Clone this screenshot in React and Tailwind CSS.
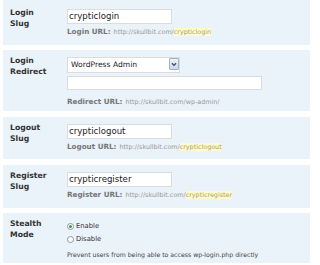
const font = { fontFamily: '"DejaVu Sans", Verdana, sans-serif' };

function Row({ label, children, className = '' }) {
  return (
    <div className={`flex bg-[#eaf2fa] ${className}`}>
      <div className="w-[64px] shrink-0 pl-[7px] pt-[5px] text-[7.7px] leading-[11px] font-bold text-[#333]">
        {label[0]}
        <br />
        {label[1]}
      </div>
      <div className="flex flex-col">{children}</div>
    </div>
  );
}

function UrlLine({ name, path, hl = true }) {
  return (
    <div className="mt-[3px] flex items-baseline h-[10px] leading-[10px] whitespace-nowrap">
      <span className="text-[7.2px] font-bold text-[#777]">{name} URL:</span>
      <span className="ml-[3px] text-[6.4px] text-[#999]">
        http://skullbit.com/
        {hl ? <span className="bg-[#fffbcc] text-[#aaa070]">{path}</span> : path}
      </span>
    </div>
  );
}

function TextBox({ value, wide }) {
  return (
    <div
      className={`${wide ? 'w-[195px] h-[14px] mt-[3px]' : 'w-[105px] h-[15px]'} bg-white border border-[#dcdcdc] pl-[1px] text-[8.6px] leading-[13px] text-[#222]`}
    >
      {value}
    </div>
  );
}

function Radio({ checked, label }) {
  return (
    <div className="flex items-center h-[13px]">
      <span className="w-[7px] h-[7px] rounded-full border border-[#8a9aa8] bg-white flex items-center justify-center">
        {checked && <span className="w-[3px] h-[3px] rounded-full bg-[#3f9a3a]" />}
      </span>
      <span className="ml-[2px] text-[6.8px] text-[#333]">{label}</span>
    </div>
  );
}

export default function App() {
  return (
    <div className="w-[310px] h-[265px] bg-white pl-[3px] overflow-hidden" style={font}>
      <div className="flex flex-col gap-[5px]">
        <Row label={['Login', 'Slug']} className="h-[45px] pt-[2px]">
          <div className="pt-[7px]">
            <TextBox value="crypticlogin" />
          </div>
          <UrlLine name="Login" path="crypticlogin" />
        </Row>

        <Row label={['Login', 'Redirect']} className="h-[61px]">
          <div className="pt-[7px] flex">
            <div className="w-[113px] h-[16px] bg-white border border-[#dcdcdc] flex items-start">
              <span className="flex-1 pl-[3px] text-[7.6px] leading-[14px] text-[#222]">WordPress Admin</span>
              <span className="w-[10px] h-[12px] mr-[0px] mt-[0px] border border-[#9fb2c8] rounded-[1px] bg-gradient-to-b from-[#eef3fa] to-[#c9d8ea] flex items-center justify-center">
                <svg width="6" height="5" viewBox="0 0 6 5">
                  <path d="M1 1.2 L3 3.4 L5 1.2" fill="none" stroke="#3a4b63" strokeWidth="1.3" />
                </svg>
              </span>
            </div>
          </div>
          <TextBox wide value="" />
          <div className="mt-[4px]">
            <UrlLine name="Redirect" path="wp-admin/" hl={false} />
          </div>
        </Row>

        <Row label={['Logout', 'Slug']} className="h-[42px] mt-[1px]">
          <div className="pt-[7px]">
            <TextBox value="crypticlogout" />
          </div>
          <UrlLine name="Logout" path="crypticlogout" />
        </Row>

        <Row label={['Register', 'Slug']} className="h-[43px] mt-[1px]">
          <div className="pt-[7px]">
            <TextBox value="crypticregister" />
          </div>
          <UrlLine name="Register" path="crypticregister" />
        </Row>

        <Row label={['Stealth', 'Mode']} className="h-[50px]">
          <div className="pt-[7px]">
            <Radio checked label="Enable" />
            <Radio label="Disable" />
          </div>
          <div className="mt-[4px] text-[6.2px] leading-[10px] text-[#444] whitespace-nowrap">
            Prevent users from being able to access wp-login.php directly
          </div>
        </Row>
      </div>
    </div>
  );
}
